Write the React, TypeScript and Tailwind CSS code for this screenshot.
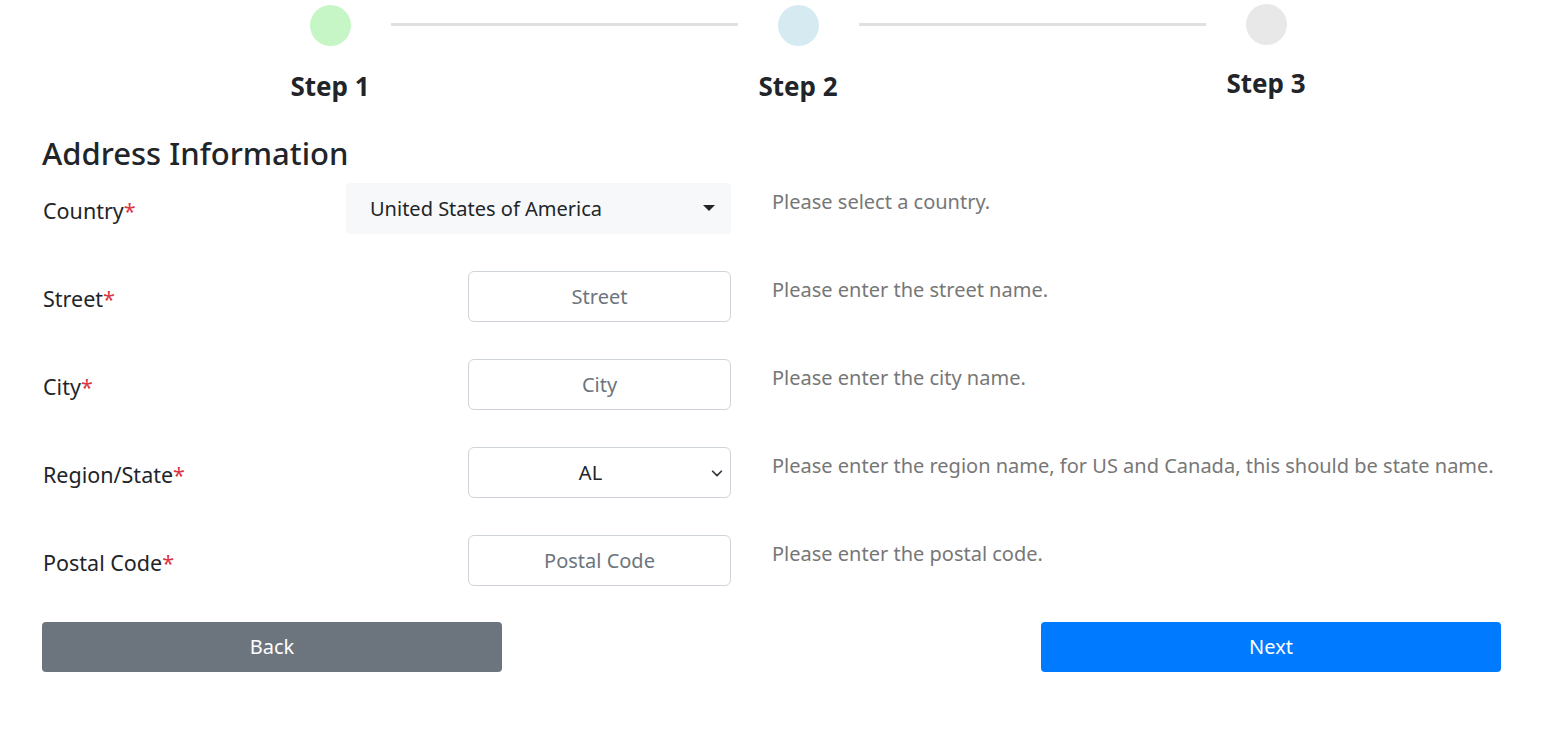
import { type FC } from "react";

const font = "font-['Segoe_UI','Noto_Sans',sans-serif]";

const steps = [
    { label: "Step 1", color: "bg-[#c6f6c6]", offset: "", labelOffset: "mt-[24px]" },
    { label: "Step 2", color: "bg-[#d6eaf2]", offset: "", labelOffset: "mt-[24px]" },
    { label: "Step 3", color: "bg-[#e8e8e8]", offset: "-mt-[1px]", labelOffset: "mt-[22px]" },
];

const Stepper: FC = () => {
    return (
        <div className="flex pl-[96px] pr-[45px]">
            {steps.map((step, i) => (
                <div key={step.label} className={`flex-1 flex flex-col items-center ${step.offset}`}>
                    <div className="relative w-full flex justify-center pt-[5px]">
                        <div className={`w-[41px] h-[41px] rounded-full ${step.color}`}></div>
                        {i < steps.length - 1 && (
                            <div className="absolute top-[23px] left-[calc(50%+61px)] w-[347px] h-[3px] bg-[#e0e0e0]"></div>
                        )}
                    </div>
                    <div className={`${step.labelOffset} text-[26px] font-bold text-[#212529] leading-[32px]`}>{step.label}</div>
                </div>
            ))}
        </div>
    );
};

type Row = {
    label: string;
    help: string;
    kind: "country" | "input" | "region";
    placeholder?: string;
};

const rows: Row[] = [
    { label: "Country", help: "Please select a country.", kind: "country" },
    { label: "Street", help: "Please enter the street name.", kind: "input", placeholder: "Street" },
    { label: "City", help: "Please enter the city name.", kind: "input", placeholder: "City" },
    { label: "Region/State", help: "Please enter the region name, for US and Canada, this should be state name.", kind: "region" },
    { label: "Postal Code", help: "Please enter the postal code.", kind: "input", placeholder: "Postal Code" },
];

const Field: FC<{ row: Row }> = ({ row }) => {
    if (row.kind === "country") {
        return (
            <div className="w-[385px] h-[51px] rounded bg-[#f7f8fa] flex items-center pl-[24px] pr-[16px] text-[#212529]">
                <span className="flex-1">United States of America</span>
                <svg width="12" height="7" viewBox="0 0 12 7"><path d="M0 0 L12 0 L6 6 Z" fill="#212529" /></svg>
            </div>
        );
    }
    if (row.kind === "region") {
        return (
            <div className="w-[263px] h-[51px] rounded-md border border-[#ced4da] flex items-center pr-[6px] text-[#212529]">
                <span className="flex-1 text-center pl-[2px]">AL</span>
                <svg width="14" height="14" viewBox="0 0 16 16"><path d="M3 6 L8 11 L13 6" fill="none" stroke="#343a40" strokeWidth="2" strokeLinecap="round" strokeLinejoin="round" /></svg>
            </div>
        );
    }
    return (
        <input
            className="w-[263px] h-[51px] rounded-md border border-[#ced4da] text-center text-[#212529] placeholder:text-[#6c757d] outline-none"
            placeholder={row.placeholder}
        />
    );
};

export default function App() {
    return (
        <div className={`${font} bg-white min-h-[741px] text-[20px] text-[#212529]`}>
            <Stepper />
            <div className="pl-[42px] pr-[44px]">
                <h2 className="mt-[31px] text-[31px] font-medium leading-[40px]">Address Information</h2>
                <div className="mt-[10px] flex flex-col gap-[37px]">
                    {rows.map((row) => (
                        <div key={row.label} className="flex">
                            <div className="w-[689px] flex items-center justify-between pt-[6px]">
                                <label className="pl-[1px] text-[21.5px]">
                                    {row.label}<span className="text-[#dc3545]">*</span>
                                </label>
                                <div className="-mt-[6px]"><Field row={row} /></div>
                            </div>
                            <div className="ml-[41px] pt-[4px] text-[#777777] whitespace-nowrap">{row.help}</div>
                        </div>
                    ))}
                </div>
                <div className="mt-[36px] flex justify-between">
                    <button className="w-[460px] h-[50px] rounded bg-[#6c757d] text-white">Back</button>
                    <button className="w-[460px] h-[50px] rounded bg-[#007bff] text-white">Next</button>
                </div>
            </div>
        </div>
    );
}
